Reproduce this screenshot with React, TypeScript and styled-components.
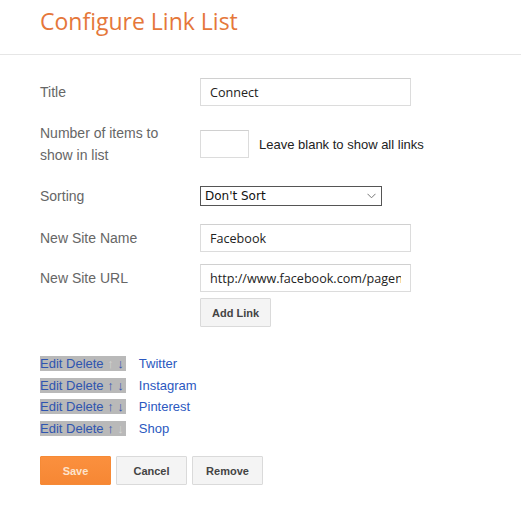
import React from "react";
import styled, { createGlobalStyle } from "styled-components";

const GlobalStyle = createGlobalStyle`
  body {
    margin: 0;
    background: #fff;
    font-family: "Liberation Sans", Arial, sans-serif;
  }
`;

const Header = styled.header`
  height: 55px;
  box-sizing: border-box;
  padding: 6px 0 0 40px;
  border-bottom: 1px solid #e6e6e6;
`;

const Heading = styled.h1`
  margin: 0;
  font-family: "Open Sans", sans-serif;
  font-weight: 400;
  font-size: 23px;
  line-height: 30px;
  color: #e5773a;
`;

const Form = styled.form`
  padding: 23px 0 0 40px;
`;

const Row = styled.div<{ $top?: number }>`
  display: flex;
  align-items: center;
  margin-top: ${p => p.$top ?? 0}px;
`;

const Label = styled.label`
  width: 160px;
  flex: none;
  font-size: 14px;
  line-height: 22px;
  color: #666;
  span {
    display: block;
    width: 130px;
  }
`;

const TextInput = styled.input<{ $width?: number }>`
  box-sizing: border-box;
  width: ${p => p.$width ?? 211}px;
  height: 28px;
  padding: 0 9px;
  border: 1px solid #dcdcdc;
  border-top-color: #d0d0d0;
  font-family: "Open Sans", sans-serif;
  font-size: 12.6px;
  color: #222;
  outline: none;
`;

const Hint = styled.span`
  margin-left: 10px;
  font-size: 13px;
  color: #222;
`;

const SelectWrap = styled.div`
  position: relative;
  width: 182px;
  height: 20px;
  svg {
    position: absolute;
    right: 6px;
    top: 7px;
    pointer-events: none;
  }
`;

const Select = styled.select`
  appearance: none;
  box-sizing: border-box;
  width: 100%;
  height: 20px;
  padding: 0 0 0 4px;
  border: 1px solid #555;
  border-radius: 0;
  background: #fff;
  font-family: "DejaVu Sans", Tahoma, sans-serif;
  font-size: 12px;
  color: #111;
`;

const Button = styled.button<{ $primary?: boolean }>`
  box-sizing: border-box;
  width: 71px;
  height: 29px;
  padding: 0;
  border: 1px solid ${p => (p.$primary ? "#f68a36" : "#dadada")};
  border-radius: 1px;
  background: ${p => (p.$primary ? "linear-gradient(#fb903e, #f68734)" : "#f4f4f4")};
  font-family: "Liberation Sans", Arial, sans-serif;
  font-weight: 700;
  font-size: 11px;
  color: ${p => (p.$primary ? "#fde3cc" : "#444")};
`;

const Spacer = styled.div`
  width: 160px;
  flex: none;
`;

const LinkList = styled.ul`
  list-style: none;
  margin: 26px 0 0;
  padding: 0;
`;

const LinkItem = styled.li`
  font-size: 13px;
  line-height: 21.5px;
`;

const Controls = styled.span`
  background: #b9b9b9;
  color: #2f55b0;
  padding-right: 2px;
`;

const Arrow = styled.span<{ $disabled?: boolean }>`
  color: ${p => (p.$disabled ? "#d4d4d4" : "#2f55b0")};
`;

const SiteName = styled.a`
  margin-left: 13px;
  color: #2b58c0;
  text-decoration: none;
`;

const Actions = styled.div`
  display: flex;
  gap: 5px;
  margin-top: 17px;
`;

const links = ["Twitter", "Instagram", "Pinterest", "Shop"];

export default function App() {
  return (
    <>
      <GlobalStyle />
      <Header>
        <Heading>Configure Link List</Heading>
      </Header>
      <Form onSubmit={e => e.preventDefault()}>
        <Row>
          <Label>Title</Label>
          <TextInput defaultValue="Connect" />
        </Row>
        <Row $top={16}>
          <Label>
            <span>Number of items to show in list</span>
          </Label>
          <TextInput $width={49} />
          <Hint>Leave blank to show all links</Hint>
        </Row>
        <Row $top={19}>
          <Label>Sorting</Label>
          <SelectWrap>
            <Select defaultValue="none">
              <option value="none">Don't Sort</option>
              <option value="alpha">Alphabetical</option>
              <option value="reverse">Reverse Alphabetical</option>
            </Select>
            <svg width="9" height="6" viewBox="0 0 9 6">
              <path d="M0.5 0.8 L4.5 4.8 L8.5 0.8" fill="none" stroke="#777" strokeWidth="1" />
            </svg>
          </SelectWrap>
        </Row>
        <Row $top={17}>
          <Label>New Site Name</Label>
          <TextInput defaultValue="Facebook" />
        </Row>
        <Row $top={12}>
          <Label>New Site URL</Label>
          <TextInput defaultValue="http://www.facebook.com/pagename" />
        </Row>
        <Row $top={6}>
          <Spacer />
          <Button type="button">Add Link</Button>
        </Row>
        <LinkList>
          {links.map((name, i) => (
            <LinkItem key={name}>
              <Controls>
                Edit Delete <Arrow $disabled={i === 0}>↑</Arrow>{" "}
                <Arrow $disabled={i === links.length - 1}>↓</Arrow>
              </Controls>
              <SiteName href="#">{name}</SiteName>
            </LinkItem>
          ))}
        </LinkList>
        <Actions>
          <Button $primary type="submit">Save</Button>
          <Button type="button">Cancel</Button>
          <Button type="button">Remove</Button>
        </Actions>
      </Form>
    </>
  );
}
